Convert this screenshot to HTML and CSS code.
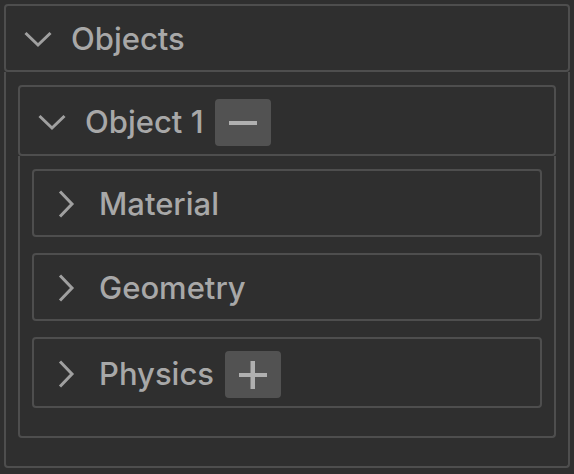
FILE: index.html
```html
<!DOCTYPE html>
<html>
<head>
<meta charset="utf-8">
<link rel="stylesheet" href="styles.css">
</head>
<body>
<div class="panel">
  <div class="head">
    <svg class="chev" viewBox="0 0 32 32"><polyline points="3.5,10 16,22 28.5,10"/></svg>
    <span class="label">Objects</span>
  </div>
  <div class="content">
    <div class="panel inner">
      <div class="head">
        <svg class="chev" viewBox="0 0 32 32"><polyline points="3.5,10 16,22 28.5,10"/></svg>
        <span class="label">Object 1</span>
        <span class="btn"><svg viewBox="0 0 56 47"><rect x="14" y="22" width="28" height="4"/></svg></span>
      </div>
      <div class="content">
        <div class="panel inner">
          <div class="head">
            <svg class="chev" viewBox="0 0 32 32"><polyline points="10,3.5 22,16 10,28.5"/></svg>
            <span class="label">Material</span>
          </div>
        </div>
        <div class="panel inner">
          <div class="head">
            <svg class="chev" viewBox="0 0 32 32"><polyline points="10,3.5 22,16 10,28.5"/></svg>
            <span class="label">Geometry</span>
          </div>
        </div>
        <div class="panel inner">
          <div class="head">
            <svg class="chev" viewBox="0 0 32 32"><polyline points="10,3.5 22,16 10,28.5"/></svg>
            <span class="label">Physics</span>
            <span class="btn"><svg viewBox="0 0 56 47"><rect x="14" y="22" width="28" height="4"/><rect x="25.5" y="10" width="4.5" height="28"/></svg></span>
          </div>
        </div>
      </div>
    </div>
  </div>
</div>
</body>
</html>
```
FILE: styles.css
```css
html, body {
  margin: 0;
  background: #2f2f2f;
}
body {
  padding: 4px;
  width: 566px;
  height: 466px;
  font-family: Inter, "Noto Sans", sans-serif;
  font-size: 31px;
  font-weight: 500;
  color: #a8a8a8;
}
.panel.inner {
  margin-bottom: 16px;
}
.head {
  display: flex;
  align-items: center;
  border: 2px solid #4e4e4e;
  border-radius: 4px;
  padding: 11px 16px 9px 16px;
}
.chev {
  width: 32px;
  height: 32px;
  margin-right: 17px;
  flex: none;
}
.chev polyline {
  fill: none;
  stroke: #a0a0a0;
  stroke-width: 3;
}
.label {
  line-height: 44px;
}
.btn {
  display: block;
  width: 56px;
  height: 47px;
  margin: 1px 0 -1px 11px;
  background: #525252;
  border-radius: 4px;
}
.btn svg {
  display: block;
  width: 56px;
  height: 47px;
}
.btn rect {
  fill: #b0b0b0;
}
.content {
  border: 2px solid #4e4e4e;
  border-top: none;
  border-radius: 0 0 4px 4px;
  padding: 13px 12px 12px 12px;
}
```
